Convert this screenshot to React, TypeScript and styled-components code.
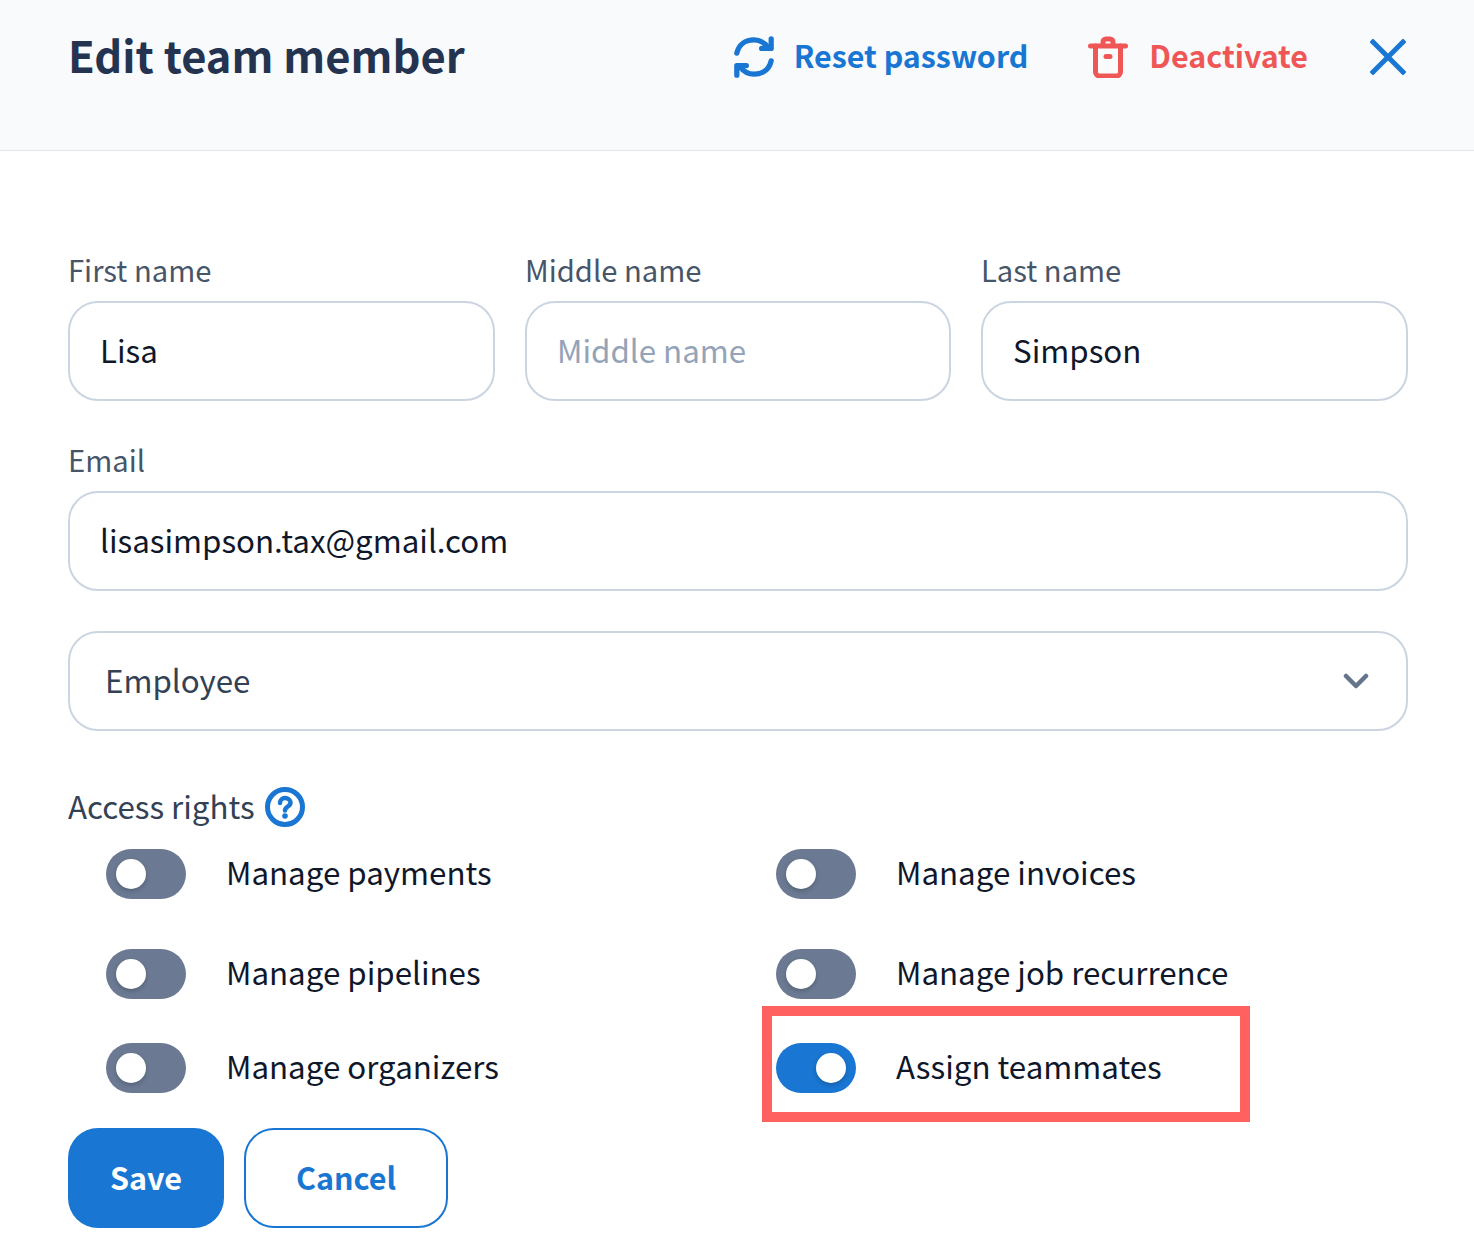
import React from "react";
import styled, { createGlobalStyle } from "styled-components";

const Global = createGlobalStyle`
  html, body { margin: 0; padding: 0; background: #fff; }
  * { box-sizing: border-box; }
  body { font-family: "Noto Sans CJK SC", "Noto Sans", sans-serif; }
`;

const Page = styled.div`
  position: relative;
  width: 1474px;
  height: 1250px;
  overflow: hidden;
  background: #fff;
`;

const Header = styled.header`
  height: 151px;
  background: #f8fafc;
  border-bottom: 1px solid #e2e8f0;
  display: flex;
  align-items: flex-start;
  padding: 22px 68px 0 68px;
`;

const Title = styled.h1`
  margin: 0;
  flex: 1;
  font-size: 43.500px;
  line-height: 66px;
  font-weight: 600;
  color: #24334f;
`;

const Action = styled.button<{ $color: string; $gap: number; $ml: number }>`
  display: flex;
  align-items: center;
  gap: ${(p) => p.$gap}px;
  height: 68px;
  margin-left: ${(p) => p.$ml}px;
  padding: 0 0 2px;
  border: 0;
  background: none;
  font: 600 30.400px/64px "Noto Sans CJK SC", sans-serif;
  color: ${(p) => p.$color};

  svg {
    margin-top: 3px;
  }
`;

const Form = styled.div`
  padding: 96px 66px 0 68px;
  display: flex;
  flex-direction: column;
`;

const NameRow = styled.div`
  display: grid;
  grid-template-columns: 427px 426px 427px;
  gap: 30px;
`;

const Field = styled.div`
  display: flex;
  flex-direction: column;
`;

const Label = styled.label`
  font-size: 29.200px;
  line-height: 44px;
  height: 54px;
  color: #475569;
`;

const Input = styled.div<{ $placeholder?: boolean }>`
  height: 100px;
  border: 2px solid #cbd5e1;
  border-radius: 30px;
  padding: 0 30px 4px;
  display: flex;
  align-items: center;
  font-size: 31.300px;
  color: ${(p) => (p.$placeholder ? "#94a3b8" : "#0f172a")};
  background: #fff;
`;

const EmailField = styled(Field)`
  margin-top: 36px;
`;

const Select = styled(Input)`
  margin-top: 40px;
  padding: 0 37px 4px 35px;
  justify-content: space-between;
  color: #334155;

  svg {
    margin-top: 4px;
  }
`;

const AccessHead = styled.div`
  margin-top: 52px;
  height: 50px;
  padding-bottom: 6px;
  display: flex;
  align-items: center;
  gap: 10px;
  font-size: 31.300px;
  color: #334155;

  svg {
    margin-top: 4px;
  }
`;

const PermGrid = styled.div`
  margin-top: 16px;
  padding-left: 38px;
  display: grid;
  grid-template-columns: 670px 1fr;
`;

const Perm = styled.div<{ $mb: number }>`
  display: flex;
  align-items: center;
  gap: 40px;
  height: 50px;
  margin-bottom: ${(p) => p.$mb}px;
  font-size: 31.300px;
  color: #0f172a;
`;

const PermText = styled.span`
  margin-bottom: 6px;
`;

const Toggle = styled.span<{ $on?: boolean }>`
  width: 80px;
  height: 50px;
  border-radius: 25px;
  flex: none;
  display: flex;
  align-items: center;
  padding: 0 10px;
  justify-content: ${(p) => (p.$on ? "flex-end" : "flex-start")};
  background: ${(p) => (p.$on ? "#1976d2" : "#6b7a92")};
`;

const Knob = styled.span`
  width: 30px;
  height: 30px;
  border-radius: 50%;
  background: #fff;
  box-shadow: 0 2px 4px rgba(15, 23, 42, 0.25);
`;

const Buttons = styled.div`
  margin-top: -9px;
  display: flex;
  gap: 20px;
`;

const Save = styled.button`
  width: 156px;
  height: 100px;
  padding: 0 0 3px;
  border: 0;
  border-radius: 30px;
  background: #1976d2;
  color: #fff;
  font: 600 30.500px "Noto Sans CJK SC", sans-serif;
`;

const Cancel = styled.button`
  width: 204px;
  height: 100px;
  padding: 0 0 3px;
  border: 2px solid #1976d2;
  border-radius: 30px;
  background: #fff;
  color: #1976d2;
  font: 600 30.500px "Noto Sans CJK SC", sans-serif;
`;

const Highlight = styled.div`
  position: absolute;
  left: 762px;
  top: 1006px;
  width: 488px;
  height: 116px;
  border: 10px solid #ff6161;
  pointer-events: none;
`;

const RefreshIcon = () => (
  <svg width="42" height="42" viewBox="0 0 44 44" fill="none" stroke="#1976d2" strokeWidth="5.500" strokeLinecap="round" strokeLinejoin="round">
    <path d="M4 18C6 9 13 4 22 4c6 0 11 3 15 8" />
    <path d="M40 3v10H30" />
    <path d="M40 26c-2 9-9 14-18 14-6 0-11-3-15-8" />
    <path d="M4 41V31h10" />
  </svg>
);

const TrashIcon = () => (
  <svg width="40" height="42" viewBox="0 0 40 42" fill="none" stroke="#ef5757" strokeWidth="5" strokeLinecap="round" strokeLinejoin="round">
    <path d="M2.500 10h35" />
    <path d="M15 9V6a3 3 0 0 1 3-3h4a3 3 0 0 1 3 3v3" />
    <path d="M7.500 10v26a4 4 0 0 0 4 4h17a4 4 0 0 0 4-4V10" />
    <path d="M18 20.500h4" />
  </svg>
);

const CloseIcon = () => (
  <svg width="36" height="36" viewBox="0 0 36 36" fill="none" stroke="#1976d2" strokeWidth="5" strokeLinecap="square">
    <path d="M3 3l30 30M33 3L3 33" />
  </svg>
);

const ChevronIcon = () => (
  <svg width="26" height="16" viewBox="0 0 26 16" fill="none" stroke="#64748b" strokeWidth="4.500" strokeLinecap="round" strokeLinejoin="round">
    <path d="M3 3l10 10L23 3" />
  </svg>
);

const HelpIcon = () => (
  <svg width="40" height="40" viewBox="0 0 40 40" fill="none" stroke="#1976d2">
    <circle cx="20" cy="20" r="17.500" strokeWidth="5" />
    <path d="M15 16c0-3 2.500-5 5-5s5.500 1.800 5.500 4.800c0 3.700-5.500 3.700-5.500 7.700" strokeWidth="4.500" strokeLinecap="round" />
    <circle cx="20" cy="29" r="2.800" fill="#1976d2" stroke="none" />
  </svg>
);

const perms: { label: string; on?: boolean; mb: number }[] = [
  { label: "Manage payments", mb: 50 },
  { label: "Manage invoices", mb: 50 },
  { label: "Manage pipelines", mb: 44 },
  { label: "Manage job recurrence", mb: 44 },
  { label: "Manage organizers", mb: 44 },
  { label: "Assign teammates", on: true, mb: 44 },
];

export default function App() {
  return (
    <Page>
      <Global />
      <Header>
        <Title>Edit team member</Title>
        <Action $color="#1976d2" $gap={19} $ml={0}>
          <RefreshIcon />
          Reset password
        </Action>
        <Action $color="#ef5757" $gap={21} $ml={60}>
          <TrashIcon />
          Deactivate
        </Action>
        <Action $color="#1976d2" $gap={0} $ml={62}>
          <CloseIcon />
        </Action>
      </Header>
      <Form>
        <NameRow>
          <Field>
            <Label>First name</Label>
            <Input>Lisa</Input>
          </Field>
          <Field>
            <Label>Middle name</Label>
            <Input $placeholder>Middle name</Input>
          </Field>
          <Field>
            <Label>Last name</Label>
            <Input>Simpson</Input>
          </Field>
        </NameRow>
        <EmailField>
          <Label>Email</Label>
          <Input>lisasimpson.tax@gmail.com</Input>
        </EmailField>
        <Select>
          Employee
          <ChevronIcon />
        </Select>
        <AccessHead>
          Access rights
          <HelpIcon />
        </AccessHead>
        <PermGrid>
          {perms.map((p) => (
            <Perm key={p.label} $mb={p.mb}>
              <Toggle $on={p.on}>
                <Knob />
              </Toggle>
              <PermText>{p.label}</PermText>
            </Perm>
          ))}
        </PermGrid>
        <Buttons>
          <Save>Save</Save>
          <Cancel>Cancel</Cancel>
        </Buttons>
      </Form>
      <Highlight />
    </Page>
  );
}
